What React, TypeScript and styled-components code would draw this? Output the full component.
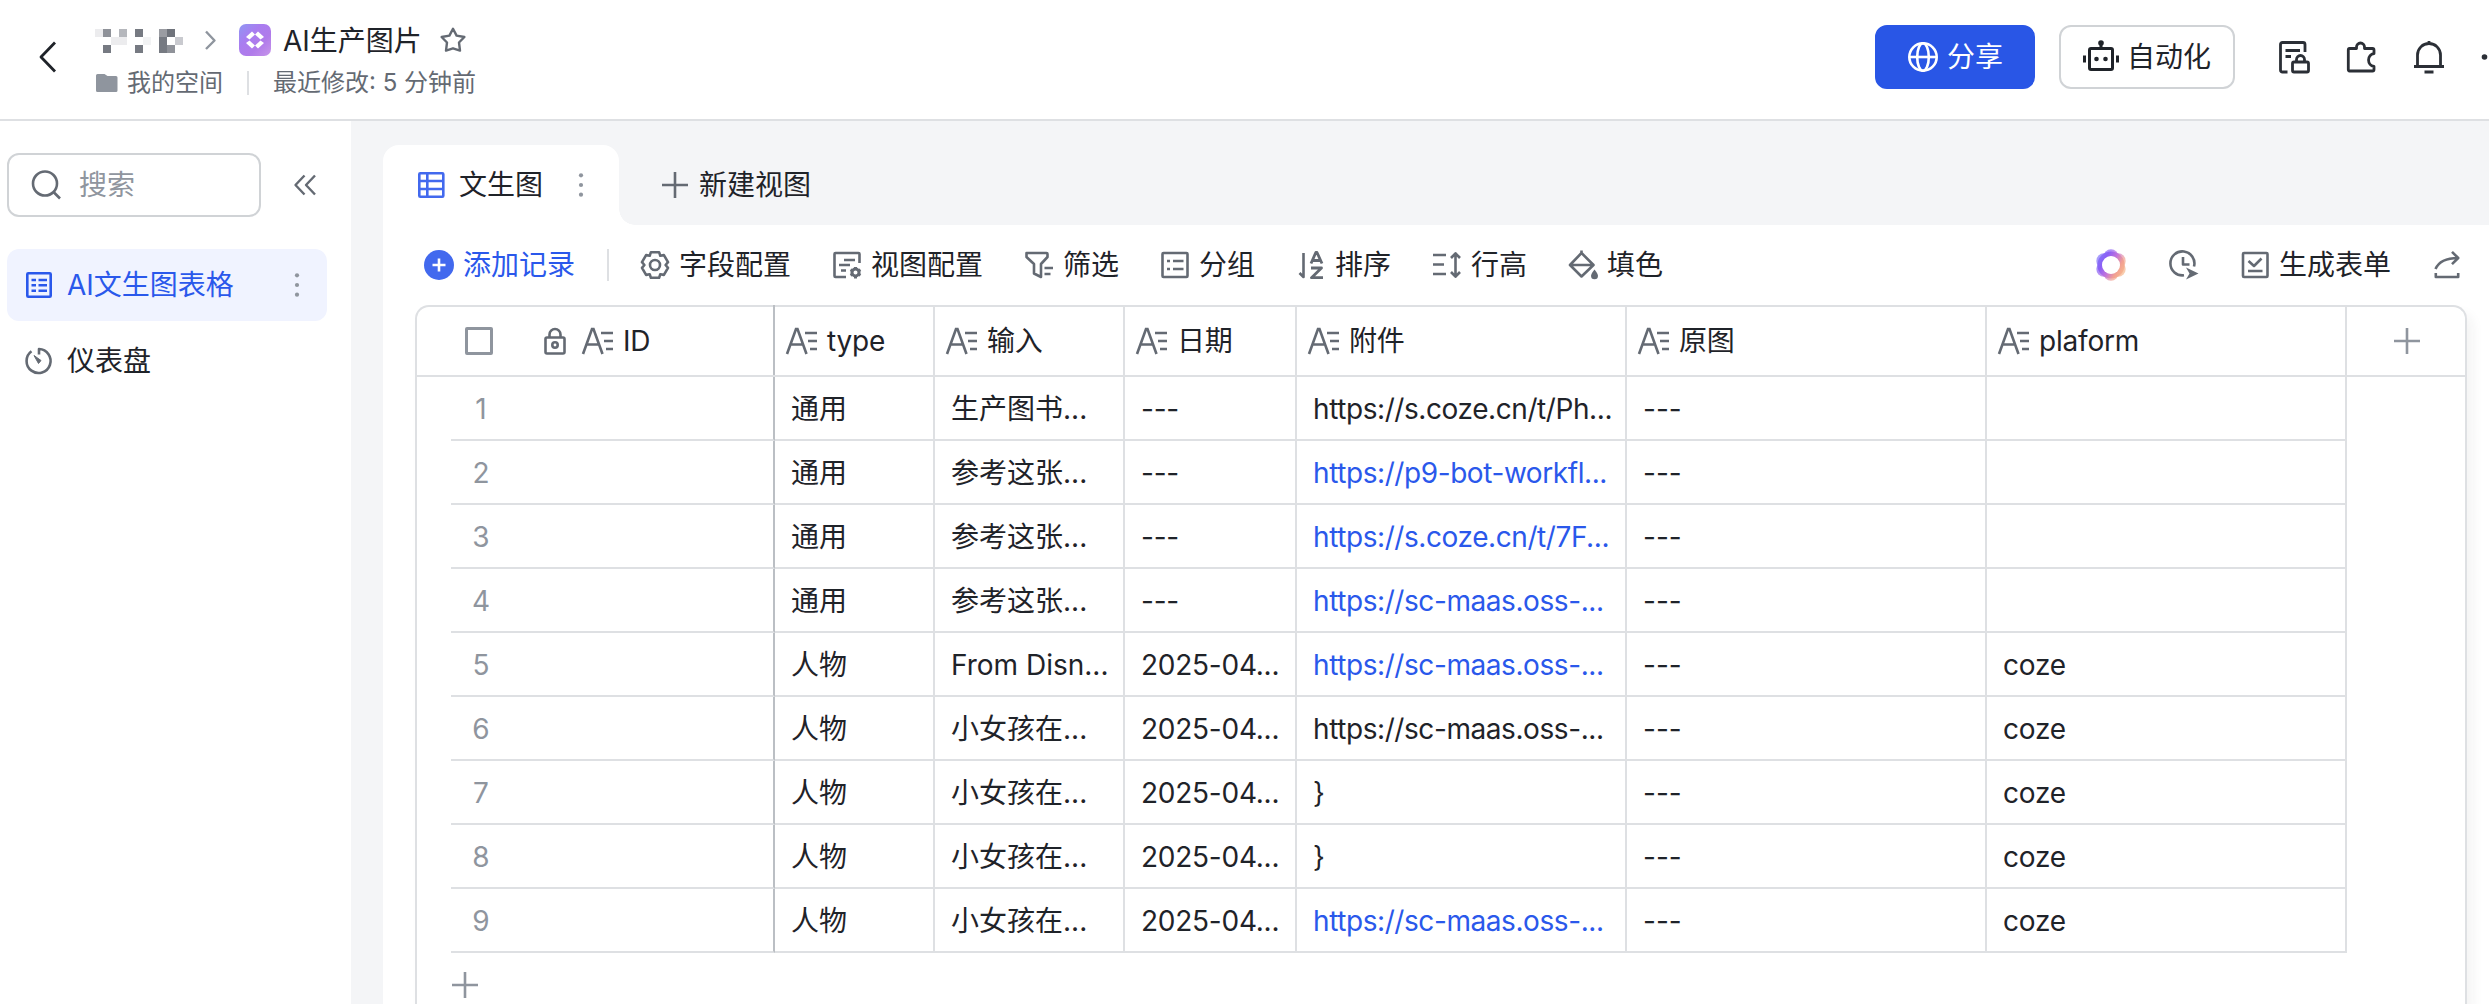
import React from 'react';
import styled, { createGlobalStyle } from 'styled-components';

const GlobalStyle = createGlobalStyle`
  * {
    box-sizing: border-box;
  }

  body {
    margin: 0;
    overflow: hidden;
    background: #fff;
    color: #1f2329;
    font-family: Inter, 'Noto Sans CJK SC', sans-serif;
    font-size: 28px;
    line-height: 40px;
  }
`;

const Page = styled.div`
  width: 100%;
  height: 100vh;
  display: flex;
  flex-direction: column;
  overflow: hidden;
`;

const Svg = styled.svg<{ $color?: string }>`
  flex: none;
  display: block;
  overflow: visible;
  fill: none;
  color: ${(p) => p.$color || '#646a73'};
  stroke: currentColor;
  stroke-width: 2.6;
  stroke-linecap: butt;
  stroke-linejoin: round;
`;

type IconProps = { color?: string; size?: number; children?: React.ReactNode };

const Icon = ({ color, size = 32, children }: IconProps) => (
  <Svg $color={color} width={size} height={size} viewBox={`0 0 ${size} ${size}`}>
    {children}
  </Svg>
);

/* ---------- header ---------- */

const Header = styled.header`
  flex: none;
  height: 121px;
  display: flex;
  align-items: flex-start;
  border-bottom: 2px solid #dee0e3;
`;

const BackButton = styled.div`
  padding: 41px 0 0 32px;
  margin-right: 31px;
`;

const TitleBlock = styled.div`
  flex: 1;
  padding-top: 20px;
`;

const TitleRow = styled.div`
  height: 40px;
  display: flex;
  align-items: center;
`;

const Mosaic = styled.div`
  display: grid;
  grid-template-columns: repeat(11, 8px);
  grid-auto-rows: 8px;
  margin-top: 2px;
`;

const Pixel = styled.i<{ $tone: string }>`
  background: ${(p) => p.$tone};
`;

const Crumb = styled.div`
  margin: 0 18px 0 16px;
`;

const AppLogo = styled.div`
  width: 32px;
  height: 32px;
  border-radius: 7px;
  background: linear-gradient(135deg, #8f97f3 0%, #a97df0 35%, #b07bea 65%, #c795ea 100%);
`;

const Title = styled.div`
  margin: 0 18px 0 12px;
  padding-top: 1px;
  white-space: nowrap;
`;

const MetaRow = styled.div`
  height: 36px;
  margin-top: 5px;
  display: flex;
  align-items: center;
  font-size: 24px;
  color: #646a73;
  white-space: nowrap;
`;

const MetaDivider = styled.span`
  width: 2px;
  height: 24px;
  margin: 0 24px;
  background: #dee0e3;
`;

const Space = styled.span`
  margin-left: 8px;
`;

const HeaderActions = styled.div`
  display: flex;
  align-items: center;
  height: 64px;
  margin-top: 25px;
`;

const Button = styled.div<{ $primary?: boolean }>`
  width: ${(p) => (p.$primary ? 160 : 176)}px;
  height: 64px;
  margin-right: 24px;
  display: flex;
  align-items: center;
  justify-content: center;
  gap: 8px;
  border-radius: 12px;
  border: 2px solid ${(p) => (p.$primary ? '#2956e6' : '#d0d3d6')};
  background: ${(p) => (p.$primary ? '#2956e6' : '#fff')};
  color: ${(p) => (p.$primary ? '#fff' : '#1f2329')};
`;

const HeaderTools = styled.div`
  display: flex;
  gap: 35px;
  margin-left: 20px;
`;

const MoreDots = styled.div`
  width: 9px;
  height: 32px;
  overflow: hidden;
`;

/* ---------- sidebar ---------- */

const Body = styled.div`
  flex: 1;
  min-height: 0;
  display: flex;
`;

const Sidebar = styled.aside`
  flex: none;
  width: 351px;
  padding: 32px 24px 0 7px;
`;

const SearchRow = styled.div`
  display: flex;
  align-items: center;
  gap: 28px;
  margin-bottom: 32px;
`;

const SearchBox = styled.div`
  width: 254px;
  height: 64px;
  padding-left: 21px;
  display: flex;
  align-items: center;
  gap: 17px;
  border: 2px solid #d0d3d6;
  border-radius: 12px;
  color: #8f959e;
`;

const NavItem = styled.div<{ $active?: boolean }>`
  height: 72px;
  margin-bottom: 4px;
  padding: 0 14px 0 16px;
  display: flex;
  align-items: center;
  gap: 12px;
  border-radius: 12px;
  background: ${(p) => (p.$active ? '#f0f3ff' : 'transparent')};
  color: ${(p) => (p.$active ? '#2a58eb' : '#1f2329')};
`;

const Grow = styled.span`
  flex: 1;
  white-space: nowrap;
`;

/* ---------- view area ---------- */

const Main = styled.main`
  flex: 1;
  min-width: 0;
  padding: 24px 0 0 32px;
  display: flex;
  flex-direction: column;
  background: #f4f5f7;
`;

const Tabs = styled.div`
  flex: none;
  height: 80px;
  display: flex;
`;

const ActiveTab = styled.div`
  position: relative;
  width: 236px;
  padding: 0 22px 0 32px;
  display: flex;
  align-items: center;
  gap: 12px;
  background: #fff;
  border-radius: 16px 16px 0 0;

  &::after {
    content: '';
    position: absolute;
    left: 100%;
    bottom: 0;
    width: 16px;
    height: 16px;
    background: radial-gradient(circle at 100% 0, transparent 15.5px, #fff 16px);
  }
`;

const NewTab = styled.div`
  margin-left: 40px;
  display: flex;
  align-items: center;
  gap: 8px;
`;

const Panel = styled.section`
  flex: 1;
  min-height: 0;
  padding: 0 22px 0 32px;
  display: flex;
  flex-direction: column;
  background: #fff;
`;

const Toolbar = styled.div`
  flex: none;
  height: 80px;
  padding: 0 4px 0 8px;
  display: flex;
  align-items: center;
  gap: 40px;
`;

const Tool = styled.div<{ $primary?: boolean }>`
  display: flex;
  align-items: center;
  gap: 8px;
  white-space: nowrap;
  color: ${(p) => (p.$primary ? '#2a58eb' : 'inherit')};
`;

const ToolDivider = styled.span`
  width: 2px;
  height: 32px;
  margin: 0 -10px 0 -8px;
  background: #dee0e3;
`;

const Spacer = styled.span`
  flex: 1;
`;

/* ---------- grid ---------- */

const GridBox = styled.div`
  flex: 1;
  border: 2px solid #dee0e3;
  border-bottom: 0;
  border-radius: 14px 14px 0 0;
  box-shadow: 6px 8px 12px rgba(31, 35, 41, 0.05);
`;

const HeadRow = styled.div`
  height: 70px;
  display: grid;
  grid-template-columns: 358px 160px 190px 172px 330px 360px 360px 1fr;
  border-bottom: 2px solid #dee0e3;
`;

const HeadCell = styled.div`
  padding-left: 8px;
  display: flex;
  align-items: center;
  gap: 8px;
  letter-spacing: -0.2px;
  border-right: 2px solid #dee0e3;
`;

const FrozenHead = styled(HeadCell)`
  margin-top: -2px;
  padding: 2px 0 0 48px;
  border-color: #bbbfc4;
`;

const AddColumn = styled.div`
  padding-left: 2px;
  display: flex;
  align-items: center;
  justify-content: center;
`;

const Checkbox = styled.span`
  width: 28px;
  height: 28px;
  margin-right: 38px;
  border: 3px solid #8f959e;
  border-radius: 2px;
`;

const Row = styled.div`
  width: 1896px;
  height: 64px;
  margin-left: 34px;
  display: grid;
  grid-template-columns: 324px 160px 190px 172px 330px 360px 360px;
`;

const Cell = styled.div`
  padding: 12px 0 0 16px;
  overflow: hidden;
  white-space: nowrap;
  border-right: 2px solid #dee0e3;
  border-bottom: 2px solid #dee0e3;
`;

const NumberCell = styled(Cell)`
  padding: 12px 262px 0 0;
  text-align: center;
  border-right-color: #bbbfc4;
  color: #8f959e;
`;

const LatinCell = styled(Cell)`
  letter-spacing: -0.25px;
`;

const FileCell = styled(Cell)<{ $link?: boolean }>`
  letter-spacing: -0.42px;
  color: ${(p) => (p.$link ? '#2a58eb' : 'inherit')};
`;

const AddRow = styled.div`
  padding: 16px 0 0 32px;
`;

/* ---------- icons ---------- */

const Plus = ({ color }: IconProps) => (
  <Icon color={color}>
    <path d="M16 3V29M3 16H29" />
  </Icon>
);

const Dots = () => (
  <Icon color="#8f959e">
    <g fill="currentColor" stroke="none">
      <circle cx="16" cy="6.3" r="2.1" />
      <circle cx="16" cy="16" r="2.1" />
      <circle cx="16" cy="25.7" r="2.1" />
    </g>
  </Icon>
);

const TextType = () => (
  <Icon size={36}>
    <path d="M4 31L13 6H14.5L23.5 31M7.6 21.5H20" strokeLinejoin="miter" />
    <path d="M22 10H34M25 18H34M27 26H34" />
  </Icon>
);

const Gear = () => (
  <Icon>
    <path d="M11.9 3.2H20.1L21.3 6.8L24.9 6.1L29 13.2L26.6 16L29 18.8L24.9 25.9L21.3 25.2L20.1 28.8H11.9L10.7 25.2L7.1 25.9L3 18.8L5.4 16L3 13.2L7.1 6.1L10.7 6.8Z" />
    <circle cx="16" cy="16" r="5" />
  </Icon>
);

const ViewConfig = () => (
  <Icon>
    <path d="M15 28H4.5Q3.5 28 3.5 27V5Q3.5 4 4.5 4H27.5Q28.5 4 28.5 5V14M13 11H24M8 16H19M10 21.5H15" />
    <g strokeWidth="3">
      <circle cx="24.5" cy="23.5" r="3.5" />
      <path d="M24.5 18V20M24.5 27V29.5M19.5 20.7L21.5 21.8M27.5 25.2L29.5 26.3M19.5 26.3L21.5 25.2M27.5 21.8L29.5 20.7" />
    </g>
  </Icon>
);

const Filter = () => (
  <Icon>
    <path d="M3.5 4H23.5Q24.5 4 24.5 5V8L18 15V28L11 24.5V15L3.5 8Z" />
    <path d="M21.5 19H30M21.5 25H27.5" />
  </Icon>
);

const Group = () => (
  <Icon>
    <rect x="3.5" y="4" width="25" height="24" rx="1" />
    <path d="M8 12H11M14 12H24.5M8 20H11M14 20H24.5" />
  </Icon>
);

const Sort = () => (
  <Icon>
    <path d="M8.5 4V28L4.5 24" />
    <path d="M16 14.5L20.8 3.5H22L27 14.5M17.5 11.5H25.5M16 19H26.5L16.5 28.7H28" strokeWidth="2.8" />
  </Icon>
);

const RowHeight = () => (
  <Icon>
    <path d="M2 6H15M2 15.5H13M2 25H15M24.5 4.5V27.5M20 9L24.5 4.3L29 9M20 23L24.5 27.7L29 23" />
  </Icon>
);

const Fill = () => (
  <Icon>
    <path d="M14.5 1.5V5M14.5 4L26.5 16L14.5 27.5L3 16ZM4 16H26" />
    <path d="M27.5 20.5Q31 25 31 26.7A3.4 3.4 0 0 1 24 26.7Q24 25 27.5 20.5Z" fill="currentColor" stroke="none" />
  </Icon>
);

// six overlapping petals around a round hole
const Ring = () => (
  <Icon>
    <defs>
      <linearGradient id="ring" gradientUnits="userSpaceOnUse" x1="2" y1="8" x2="30" y2="24">
        <stop offset="0" stopColor="#8478fb" />
        <stop offset="0.25" stopColor="#8a5ff5" />
        <stop offset="0.5" stopColor="#c072dd" />
        <stop offset="0.75" stopColor="#f2a092" />
        <stop offset="1" stopColor="#f8bd8c" />
      </linearGradient>
    </defs>
    <g fill="url(#ring)" stroke="none" opacity="0.7">
      <circle cx="16" cy="7.8" r="7.6" />
      <circle cx="23.1" cy="11.9" r="7.6" />
      <circle cx="23.1" cy="20.1" r="7.6" />
      <circle cx="16" cy="24.2" r="7.6" />
      <circle cx="8.9" cy="20.1" r="7.6" />
      <circle cx="8.9" cy="11.9" r="7.6" />
    </g>
    <circle cx="16" cy="16" r="11.2" stroke="url(#ring)" strokeWidth="4.8" />
    <circle cx="16" cy="16" r="9" fill="#fff" stroke="none" />
  </Icon>
);

const History = () => (
  <Icon>
    <path d="M17 26.3A12 12 0 1 1 27 17.5M16 8V15.5H22.5" />
    <path d="M19 18.5L31.5 24.5L19 30.5L22.5 24.5Z" fill="currentColor" stroke="none" />
  </Icon>
);

const Form = () => (
  <Icon>
    <rect x="4" y="4" width="24.5" height="24" rx="1" />
    <path d="M9.5 12L15 17L22.5 9.5M9 22H23.5" />
  </Icon>
);

const Export = () => (
  <Icon>
    <path d="M4.5 20C8 12 15 9 27 9M21 2.8L27.2 9L21 15.2M4.8 24V28H27.2V24" />
  </Icon>
);

const PIXELS = [
  '#ececee', '#8f9299', '', '#b5b7bc', '', '#767a82', '', '', '#9a9ca2', '#6f737b', '',
  '', '', '#ececee', '#ececee', '', '', '#f2f3f4', '', '#767a82', '', '#c9cacf',
  '', '#767a82', '', '', '', '#767a82', '', '', '#767a82', '#8f9299', '',
];

const TOOLS = [
  { label: '字段配置', icon: <Gear /> },
  { label: '视图配置', icon: <ViewConfig /> },
  { label: '筛选', icon: <Filter /> },
  { label: '分组', icon: <Group /> },
  { label: '排序', icon: <Sort /> },
  { label: '行高', icon: <RowHeight /> },
  { label: '填色', icon: <Fill /> },
];

const FIELDS = ['type', '输入', '日期', '附件', '原图', 'plaform'];

type RecordRow = { type: string; input: string; date: string; file: string; link?: boolean; platform?: string };

const ROWS: RecordRow[] = [
  { type: '通用', input: '生产图书...', date: '---', file: 'https://s.coze.cn/t/Ph...' },
  { type: '通用', input: '参考这张...', date: '---', file: 'https://p9-bot-workfl...', link: true },
  { type: '通用', input: '参考这张...', date: '---', file: 'https://s.coze.cn/t/7F...', link: true },
  { type: '通用', input: '参考这张...', date: '---', file: 'https://sc-maas.oss-...', link: true },
  { type: '人物', input: 'From Disn...', date: '2025-04...', file: 'https://sc-maas.oss-...', link: true, platform: 'coze' },
  { type: '人物', input: '小女孩在...', date: '2025-04...', file: 'https://sc-maas.oss-...', platform: 'coze' },
  { type: '人物', input: '小女孩在...', date: '2025-04...', file: '}', platform: 'coze' },
  { type: '人物', input: '小女孩在...', date: '2025-04...', file: '}', platform: 'coze' },
  { type: '人物', input: '小女孩在...', date: '2025-04...', file: 'https://sc-maas.oss-...', link: true, platform: 'coze' },
];

const TopBar = () => (
  <Header>
    <BackButton>
      <Icon color="#1f2329">
        <path d="M23 1.5L9 16L23 30.5" strokeWidth="2.8" />
      </Icon>
    </BackButton>
    <TitleBlock>
      <TitleRow>
        <Mosaic>
          {PIXELS.map((tone, i) => (
            <Pixel key={i} $tone={tone || 'transparent'} />
          ))}
        </Mosaic>
        <Crumb>
          <Icon size={22} color="#8f959e">
            <path d="M7 2.5L15.5 11.5L7 20" strokeWidth="2.4" />
          </Icon>
        </Crumb>
        <AppLogo>
          <Icon color="#fff">
            <g fill="currentColor" stroke="none">
              <path d="M13 7.5L16 10.5L10.5 15.5L7 13Z" />
              <path d="M19 7.5L16 10.5L21.5 15.5L25 13Z" />
              <path d="M13 24.5L16 21.5L10.5 16.5L7 19Z" />
              <path d="M19 24.5L16 21.5L21.5 16.5L25 19Z" />
            </g>
          </Icon>
        </AppLogo>
        <Title>AI生产图片</Title>
        <Icon size={26}>
          <path d="M13 1.8L16.6 8.6L24.4 10L19 15.5L20 23.6L13 21.3L6 23.6L7 15.5L1.6 10L9.4 8.6Z" strokeWidth="2.4" />
        </Icon>
      </TitleRow>
      <MetaRow>
        <Icon size={24} color="#8f959e">
          <path d="M1 4.5Q1 3 2.5 3H9.5L12.5 5H21Q22.5 5 22.5 6.5V19.5Q22.5 21 21 21H2.5Q1 21 1 19.5Z" fill="currentColor" stroke="none" />
        </Icon>
        <Space>我的空间</Space>
        <MetaDivider />
        最近修改: 5 分钟前
      </MetaRow>
    </TitleBlock>
    <HeaderActions>
      <Button $primary>
        <Icon color="#fff">
          <circle cx="16" cy="16" r="13.7" />
          <ellipse cx="16" cy="16" rx="5.8" ry="13.7" />
          <path d="M2.5 16H29.5" />
        </Icon>
        分享
      </Button>
      <Button>
        <Icon size={36} color="#1f2329">
          <g strokeWidth="3">
            <rect x="6.5" y="9.5" width="23" height="21" rx="1.5" />
            <path d="M18 4V9M1.5 16.5V23.5M34.5 16.5V23.5" />
          </g>
          <g fill="currentColor" stroke="none">
            <circle cx="18" cy="4" r="2.8" />
            <circle cx="13.5" cy="20" r="2.3" />
            <circle cx="22.5" cy="20" r="2.3" />
          </g>
        </Icon>
        自动化
      </Button>
      <HeaderTools>
        <Icon color="#2b2f36">
          <path d="M8.5 31H3.5Q1.5 31 1.5 29V3.5Q1.5 1.5 3.5 1.5H24Q26 1.5 26 3.5V11M6.5 9.5H21M6.5 15.5H12" strokeWidth="2.8" />
          <rect x="13.5" y="21" width="16" height="10" rx="1.5" strokeWidth="2.8" />
          <path d="M17.5 21V18.5A4 4 0 0 1 25.5 18.5V21" strokeWidth="2.8" />
        </Icon>
        <Icon color="#2b2f36">
          <path
            d="M3.5 7.5H10.5V6A4 4 0 0 1 18.5 6V7.5H26.5Q28 7.5 28 9V12.5A6.6 6.6 0 0 0 28 25.5V28.5Q28 30 26.5 30H3.5Q2.3 30 2.3 28.5V9Q2.3 7.5 3.5 7.5Z"
            strokeWidth="2.8"
          />
        </Icon>
        <Icon color="#2b2f36">
          <path d="M4.5 25.5V14A11.5 11.5 0 0 1 27.5 14V25.5M1 25.5H31M11.5 31H20.5M16 0V3" strokeWidth="2.8" />
        </Icon>
        <MoreDots>
          <Icon color="#2b2f36">
            <circle cx="4.5" cy="16" r="2.8" fill="currentColor" stroke="none" />
          </Icon>
        </MoreDots>
      </HeaderTools>
    </HeaderActions>
  </Header>
);

const SideNav = () => (
  <Sidebar>
    <SearchRow>
      <SearchBox>
        <Icon>
          <circle cx="15" cy="14.5" r="12" />
          <path d="M23.5 23L30 29.5" />
        </Icon>
        搜索
      </SearchBox>
      <Icon>
        <path d="M15.5 6.5L6.5 16L15.5 25.5M26 6.5L17 16L26 25.5" strokeWidth="2.4" />
      </Icon>
    </SearchRow>
    <NavItem $active>
      <Icon color="#2a58eb">
        <rect x="4.3" y="4.3" width="23.4" height="23.4" rx="1" />
        <path d="M8.5 11H13M15.5 11H24M8.5 16.3H13M15.5 16.3H24M8.5 21.7H13M15.5 21.7H24" />
      </Icon>
      <Grow>AI文生图表格</Grow>
      <Dots />
    </NavItem>
    <NavItem>
      <Icon>
        <path d="M8.5 6.3A12 12 0 1 0 16 4V9.5" />
        <path d="M11 10.5L18 15.5L15.5 18.5Z" fill="currentColor" strokeWidth="1" />
      </Icon>
      <Grow>仪表盘</Grow>
    </NavItem>
  </Sidebar>
);

const DataGrid = () => (
  <GridBox>
    <HeadRow>
      <FrozenHead>
        <Checkbox />
        <Icon>
          <rect x="6.5" y="12.5" width="19" height="16" rx="1.5" />
          <path d="M10.5 12.5V9.5A5.5 5.5 0 0 1 21.5 9.5V12.5" />
          <circle cx="16" cy="20" r="2.7" />
        </Icon>
        <TextType />
        ID
      </FrozenHead>
      {FIELDS.map((name) => (
        <HeadCell key={name}>
          <TextType />
          {name}
        </HeadCell>
      ))}
      <AddColumn>
        <Plus color="#8f959e" />
      </AddColumn>
    </HeadRow>
    {ROWS.map((row, i) => (
      <Row key={i}>
        <NumberCell>{i + 1}</NumberCell>
        <Cell>{row.type}</Cell>
        <Cell>{row.input}</Cell>
        <LatinCell>{row.date}</LatinCell>
        <FileCell $link={row.link}>{row.file}</FileCell>
        <Cell>---</Cell>
        <LatinCell>{row.platform}</LatinCell>
      </Row>
    ))}
    <AddRow>
      <Plus color="#8f959e" />
    </AddRow>
  </GridBox>
);

export default class App extends React.Component {
  render() {
    return (
      <Page>
        <GlobalStyle />
        <TopBar />
        <Body>
          <SideNav />
          <Main>
            <Tabs>
              <ActiveTab>
                <Icon color="#4269ee">
                  <rect x="4.3" y="4.3" width="24" height="23.4" rx="1" />
                  <path d="M12.3 4V28M4 12H28M4 20H28" />
                </Icon>
                <Grow>文生图</Grow>
                <Dots />
              </ActiveTab>
              <NewTab>
                <Plus />
                新建视图
              </NewTab>
            </Tabs>
            <Panel>
              <Toolbar>
                <Tool $primary>
                  <Icon color="#4269ee">
                    <circle cx="16" cy="16" r="15" fill="currentColor" stroke="none" />
                    <path d="M16 9.5V22.5M9.5 16H22.5" stroke="#fff" />
                  </Icon>
                  添加记录
                </Tool>
                <ToolDivider />
                {TOOLS.map((tool) => (
                  <Tool key={tool.label}>
                    {tool.icon}
                    {tool.label}
                  </Tool>
                ))}
                <Spacer />
                <Ring />
                <History />
                <Tool>
                  <Form />
                  生成表单
                </Tool>
                <Export />
              </Toolbar>
              <DataGrid />
            </Panel>
          </Main>
        </Body>
      </Page>
    );
  }
}
